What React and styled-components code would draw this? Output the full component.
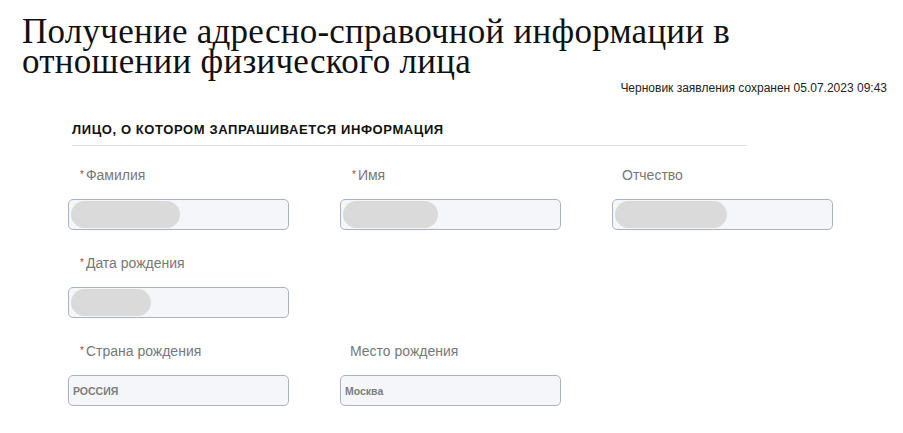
import React from 'react';
import styled, { createGlobalStyle } from 'styled-components';

const GlobalStyle = createGlobalStyle`
  body {
    margin: 0;
    background: #fff;
    font-family: "Liberation Sans", Arial, sans-serif;
  }
`;

const Page = styled.div`
  padding: 17px 16px 0 22px;
`;

const Title = styled.h1`
  margin: 0;
  font-family: "Liberation Serif", "Times New Roman", serif;
  font-weight: normal;
  font-size: 35px;
  letter-spacing: 0.25px;
  line-height: 30px;
  color: #111;
`;

const DraftNote = styled.div`
  margin-top: 4px;
  text-align: right;
  font-size: 12px;
  line-height: 14px;
  color: #222;
`;

const Form = styled.div`
  margin: 28px 0 0 46px;
`;

const SectionTitle = styled.div`
  margin-left: 4px;
  width: 675px;
  padding-bottom: 8px;
  border-bottom: 1px solid #dedede;
  font-size: 13px;
  letter-spacing: 0.6px;
  line-height: 14px;
  font-weight: bold;
  color: #111;
`;

const Grid = styled.div`
  display: grid;
  grid-template-columns: repeat(3, 221px);
  column-gap: 51px;
  row-gap: 25px;
  margin-top: 21px;
`;

const Field = styled.div`
  display: flex;
  flex-direction: column;
  gap: 16px;
  grid-column: ${p => p.$col || 'auto'};
`;

const Label = styled.div`
  padding-left: 10px;
  font-size: 14px;
  line-height: 16px;
  color: #777;
  white-space: nowrap;
`;

const Star = styled.span`
  color: #c5392f;
  font-size: 10px;
  vertical-align: top;
  margin-right: 2px;
  margin-left: 2px;
`;

const Input = styled.div`
  box-sizing: border-box;
  height: 31px;
  border: 1px solid #a9b3bf;
  border-radius: 5px;
  background: #f4f6f9;
  display: flex;
  align-items: center;
  padding: 0 4px 0 2px;
`;

const Blur = styled.div`
  height: 27px;
  border-radius: 14px;
  background: #dadada;
`;

const Value = styled.span`
  padding-left: 2px;
  font-size: 10.5px;
  font-weight: bold;
  color: #7d7d7d;
`;

function FormField({ label, required, blur, value, col }) {
  return (
    <Field $col={col}>
      <Label>
        {required && <Star>*</Star>}
        {label}
      </Label>
      <Input>
        {blur && <Blur style={{ width: blur }} />}
        {value && <Value>{value}</Value>}
      </Input>
    </Field>
  );
}

export default function App() {
  return (
    <>
      <GlobalStyle />
      <Page>
        <Title>
          Получение адресно-справочной информации в<br />
          отношении физического лица
        </Title>
        <DraftNote>Черновик заявления сохранен 05.07.2023 09:43</DraftNote>
        <Form>
          <SectionTitle>ЛИЦО, О КОТОРОМ ЗАПРАШИВАЕТСЯ ИНФОРМАЦИЯ</SectionTitle>
          <Grid>
            <FormField label="Фамилия" required blur={109} />
            <FormField label="Имя" required blur={95} />
            <FormField label="Отчество" blur={112} />
            <FormField label="Дата рождения" required blur={80} col="1" />
            <FormField label="Страна рождения" required value="РОССИЯ" col="1" />
            <FormField label="Место рождения" value="Москва" />
            <FormField label="Документ, удостоверяющий личность" required col="1" />
          </Grid>
        </Form>
      </Page>
    </>
  );
}
